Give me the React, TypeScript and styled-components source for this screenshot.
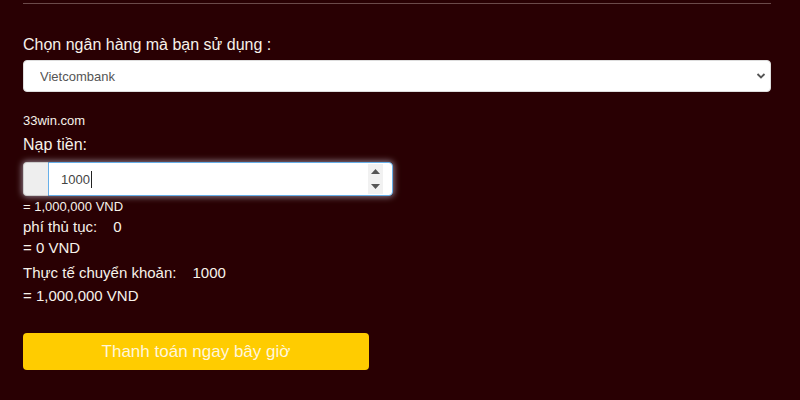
import React from 'react';
import styled, { createGlobalStyle } from 'styled-components';

const GlobalStyle = createGlobalStyle`
  html, body {
    margin: 0;
    padding: 0;
    background: #290003;
  }
  body {
    font-family: "Liberation Sans", Arial, sans-serif;
    color: #f7f2ea;
  }
`;

const Page = styled.div`
  width: 800px;
  height: 400px;
  overflow: hidden;
  background: #290003;
  padding: 3px 29px 0 23px;
  box-sizing: border-box;
`;

const Divider = styled.div`
  height: 1px;
  background: #6b4a4a;
`;

const Label = styled.div<{ size?: number }>`
  font-size: ${(p) => p.size || 16}px;
  line-height: ${(p) => (p.size || 16) + 4}px;
  color: #f7f2ea;
`;

const BankLabel = styled(Label)`
  margin-top: 31px;
`;

const SelectWrap = styled.div`
  position: relative;
  margin-top: 5px;
`;

const BankSelect = styled.select`
  appearance: none;
  width: 100%;
  height: 32px;
  border: 1px solid #ddd;
  border-radius: 4px;
  background: #fff;
  padding: 0 16px;
  font-family: "Liberation Sans", Arial, sans-serif;
  font-size: 13px;
  color: #555;
  outline: none;
`;

const Chevron = styled.svg`
  position: absolute;
  right: 5px;
  top: 12px;
  pointer-events: none;
`;

const SiteLabel = styled(Label)`
  margin-top: 20px;
`;

const DepositLabel = styled(Label)`
  margin-top: 6px;
`;

const InputGroup = styled.div`
  display: flex;
  width: 370px;
  height: 34px;
  margin-top: 7px;
  border-radius: 4px;
  box-shadow: 0 0 6px 1px rgba(230, 235, 255, 0.55);
`;

const Addon = styled.div`
  width: 24px;
  background: #eeeeee;
  border: 1px solid #ccc;
  border-right: none;
  border-radius: 4px 0 0 4px;
`;

const Field = styled.div`
  flex: 1;
  display: flex;
  align-items: center;
  background: #fff;
  border: 1px solid #66afe9;
  border-radius: 0 4px 4px 0;
  padding-left: 12px;
`;

const FieldText = styled.span`
  font-size: 13px;
  color: #444;
`;

const Caret = styled.span`
  display: inline-block;
  width: 1px;
  height: 17px;
  background: #222;
  margin-left: 1px;
`;

const Grow = styled.div`
  flex: 1;
`;

const Spinner = styled.div`
  width: 15px;
  height: 30px;
  margin-right: 9px;
  background: #f1f1f1;
  display: flex;
  flex-direction: column;
  align-items: center;
  justify-content: space-around;
`;

const Result = styled(Label)`
  margin-top: 2px;
`;

const FeeLine = styled(Label)`
  margin-top: 2px;
`;

const Value = styled.span`
  margin-left: 16px;
`;

const TransferLine = styled(Label)`
  margin-top: 6px;
`;

const TotalLine = styled(Label)`
  margin-top: 4px;
`;

const PayButton = styled.button`
  display: block;
  margin-top: 28px;
  width: 346px;
  height: 37px;
  border: none;
  border-radius: 4px;
  background: #ffcc00;
  color: #fff6dc;
  font-family: "Liberation Sans", Arial, sans-serif;
  font-size: 17px;
  cursor: pointer;
`;

const App: React.FC = () => {
  return (
    <Page>
      <GlobalStyle />
      <Divider />
      <BankLabel>Chọn ngân hàng mà bạn sử dụng :</BankLabel>
      <SelectWrap>
        <BankSelect defaultValue="vcb">
          <option value="vcb">Vietcombank</option>
        </BankSelect>
        <Chevron width="10" height="8" viewBox="0 0 10 8">
          <path d="M1.5 2 L5 5.5 L8.5 2" stroke="#555" strokeWidth="1.8" fill="none" />
        </Chevron>
      </SelectWrap>
      <SiteLabel size={13}>33win.com</SiteLabel>
      <DepositLabel>Nạp tiền:</DepositLabel>
      <InputGroup>
        <Addon />
        <Field>
          <FieldText>1000</FieldText>
          <Caret />
          <Grow />
          <Spinner>
            <svg width="9" height="5" viewBox="0 0 9 5">
              <path d="M0 5 L4.5 0 L9 5 Z" fill="#555" />
            </svg>
            <svg width="9" height="5" viewBox="0 0 9 5">
              <path d="M0 0 L4.5 5 L9 0 Z" fill="#555" />
            </svg>
          </Spinner>
        </Field>
      </InputGroup>
      <Result size={13}>= 1,000,000 VND</Result>
      <FeeLine size={15}>
        phí thủ tục:<Value>0</Value>
      </FeeLine>
      <FeeLine size={15}>= 0 VND</FeeLine>
      <TransferLine size={15}>
        Thực tế chuyển khoản:<Value>1000</Value>
      </TransferLine>
      <TotalLine size={15}>= 1,000,000 VND</TotalLine>
      <PayButton>Thanh toán ngay bây giờ</PayButton>
    </Page>
  );
};

export default App;
